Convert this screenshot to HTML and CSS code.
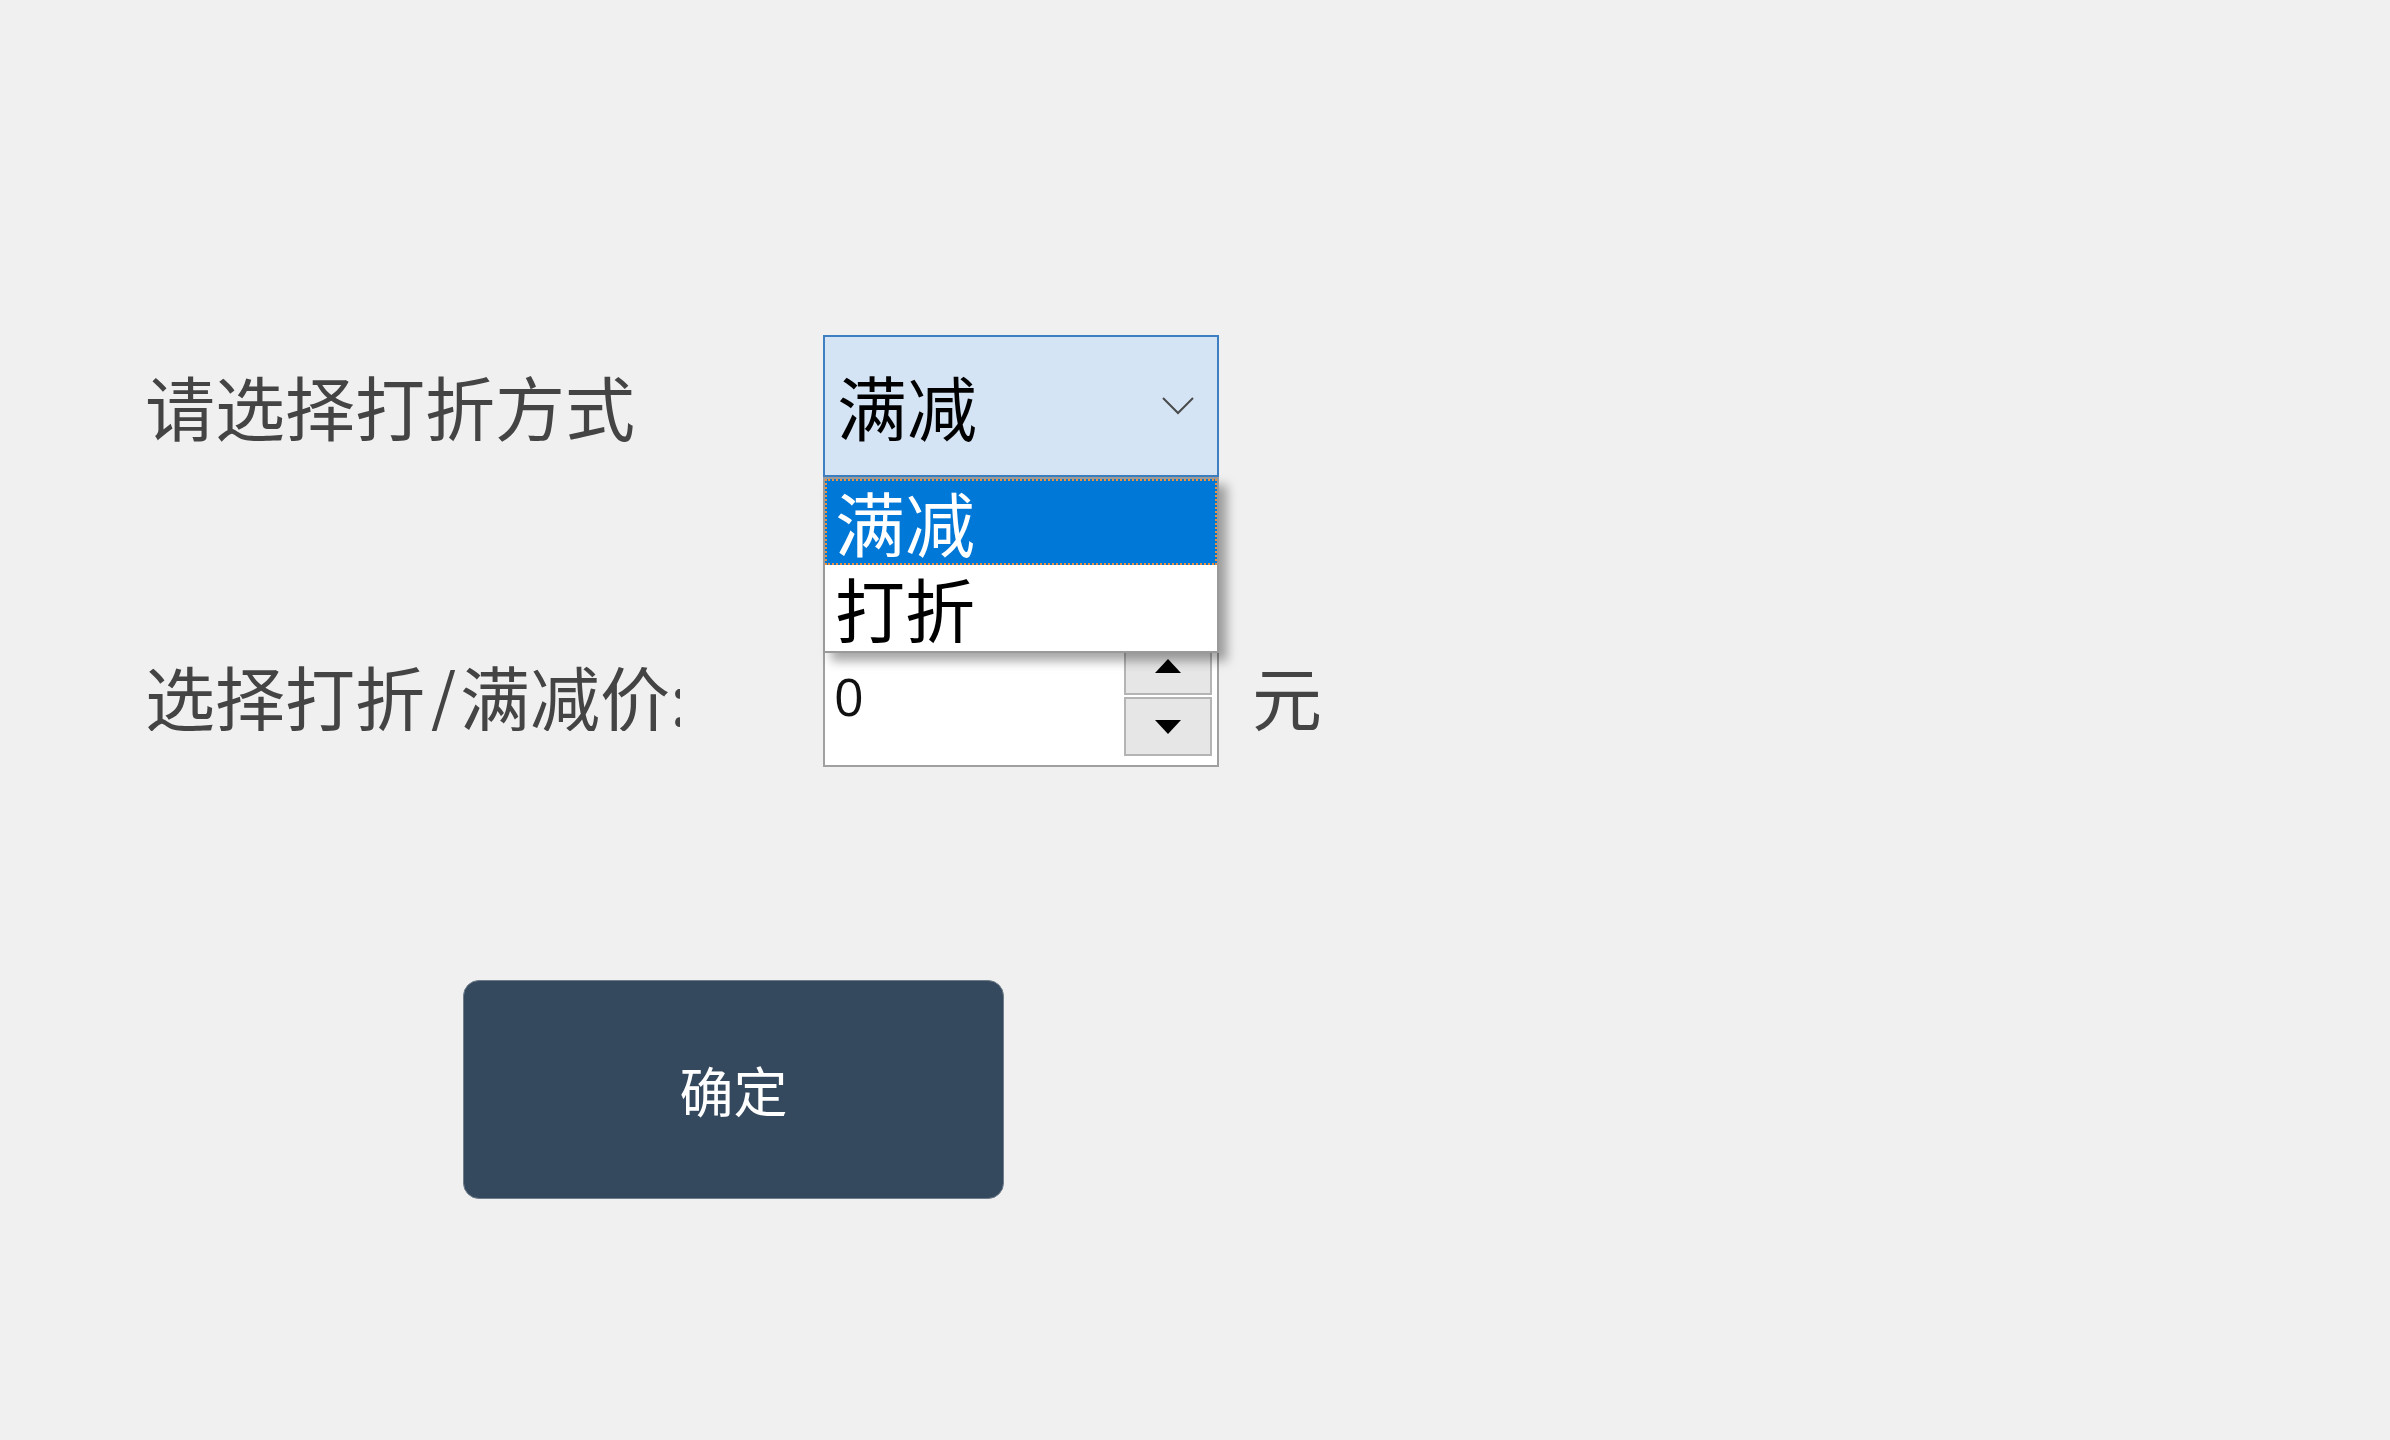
FILE: index.html
```html
<!DOCTYPE html>
<html lang="zh-CN">
<head>
  <meta charset="UTF-8" />
  <title>打折设置</title>
  <link rel="stylesheet" href="styles.css">
</head>
<body>

<main class="form">
  <div class="row">
    <div class="field-label">请选择打折方式</div>
    <div class="combo">
      <span class="combo-text">满减</span>
      <svg class="chevron" width="34" height="20" viewBox="0 0 34 20">
        <polyline points="2,2 17,17 32,2" />
      </svg>
      <ul class="combo-list">
        <li class="selected">满减</li>
        <li>打折</li>
      </ul>
    </div>
  </div>

  <div class="row row-price">
    <div class="field-label clipped">选择打折<span class="slash">/</span>满减价:</div>
    <div class="spin">
      <span class="spin-value">0</span>
      <div class="spin-buttons">
        <span class="spin-btn"><i class="arrow up"></i></span>
        <span class="spin-btn"><i class="arrow down"></i></span>
      </div>
    </div>
    <span class="unit">元</span>
  </div>

  <button class="btn-ok">确定</button>
</main>

</body>
</html>
```

FILE: styles.css
```css
* {
  box-sizing: border-box;
}

body {
  margin: 0;
  background: #f0f0f0;
  font-family: "Noto Sans CJK SC", "Noto Sans", sans-serif;
  color: #333;
}

.form {
  padding: 335px 0 0 145px;
}

.row {
  display: flex;
  align-items: center;
}

.row-price {
  margin-top: 148px;
}

.field-label {
  width: 678px;
  flex-shrink: 0;
  font-size: 70px;
  line-height: 1;
  color: #444;
  white-space: nowrap;
}

/* the label box is narrower than its text, so the colon gets cut */
.field-label.clipped {
  width: 535px;
  margin-right: 143px;
  overflow: hidden;
}

.slash {
  display: inline-block;
  width: 35px;
  text-align: center;
}

/* combo box (opened) */
.combo {
  position: relative;
  width: 396px;
  height: 142px;
  display: flex;
  align-items: center;
  justify-content: space-between;
  padding: 0 22px 0 12px;
  background: #d4e4f4;
  border: 2px solid #3d7fc1;
  color: #000;
  font-size: 70px;
  line-height: 1;
}

.chevron {
  fill: none;
  stroke: #4a4a4a;
  stroke-width: 2;
}

.combo-list {
  position: absolute;
  top: calc(100% + 2px);
  left: -2px;
  width: 396px;
  margin: 0;
  padding: 0;
  list-style: none;
  background: #fff;
  border: 2px solid #9a9a9a;
  box-shadow: 8px 8px 10px rgba(0, 0, 0, 0.35);
  z-index: 10;
}

.combo-list li {
  height: 86px;
  line-height: 86px;
  padding-left: 10px;
  font-size: 70px;
  color: #000;
}

.combo-list li.selected {
  background: #0078d7;
  color: #fff;
  outline: 2px dotted #f0903a;
  outline-offset: -2px;
}

/* numeric up/down */
.spin {
  width: 396px;
  height: 142px;
  display: flex;
  align-items: center;
  padding: 0 5px 0 9px;
  background: #fff;
  border: 2px solid #a0a0a0;
}

.spin-value {
  font-family: "Open Sans", "Noto Sans", sans-serif;
  font-size: 52px;
  line-height: 1;
  color: #111;
}

.spin-buttons {
  margin-left: auto;
  width: 88px;
  height: 120px;
  display: flex;
  flex-direction: column;
  gap: 2px;
}

.spin-btn {
  flex: 1;
  display: flex;
  align-items: center;
  justify-content: center;
  background: #e6e6e6;
  border: 2px solid #b4b4b4;
}

.arrow {
  width: 0;
  height: 0;
  border-left: 13px solid transparent;
  border-right: 13px solid transparent;
}

.arrow.up {
  border-bottom: 14px solid #000;
}

.arrow.down {
  border-top: 14px solid #000;
}

.unit {
  margin-left: 33px;
  font-size: 70px;
  line-height: 1;
  color: #444;
}

.btn-ok {
  display: block;
  width: 541px;
  height: 219px;
  margin: 213px 0 0 318px;
  background: #34495e;
  border: 1px solid #6f7d8b;
  border-radius: 16px;
  color: #fff;
  font-family: "Noto Sans CJK SC", sans-serif;
  font-size: 54px;
}
```
